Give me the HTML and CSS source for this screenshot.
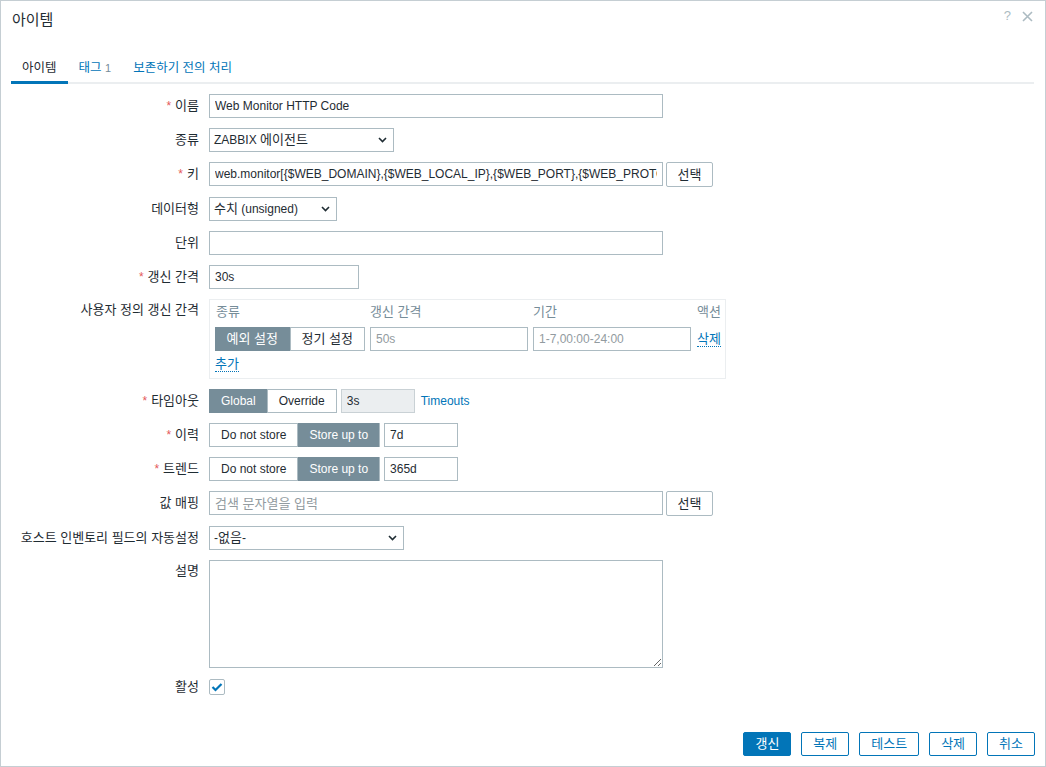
FILE: index.html
```html
<!DOCTYPE html>
<html lang="ko">
<head>
<meta charset="utf-8">
<title>아이템</title>
<link rel="stylesheet" href="styles.css">
</head>
<body>
<div class="dialog">
  <div class="header">
    <h4 class="title">아이템</h4>
    <div class="header-tools">
      <span class="help">?</span>
      <svg class="close" width="11" height="11" viewBox="0 0 11 11"><path d="M1 1L10 10M10 1L1 10" stroke="#acbbc2" stroke-width="1.6" fill="none"/></svg>
    </div>
  </div>

  <ul class="tabs">
    <li class="tab active">아이템</li>
    <li class="tab">태그 <span class="count">1</span></li>
    <li class="tab">보존하기 전의 처리</li>
  </ul>

  <div class="form">
    <label class="lbl req">이름</label>
    <div class="field"><input class="text w453" type="text" value="Web Monitor HTTP Code"></div>

    <label class="lbl">종류</label>
    <div class="field"><div class="select w185"><span>ZABBIX <span class="ko">에이전트</span></span><svg width="9" height="6" viewBox="0 0 9 6"><path d="M1 1L4.5 4.5L8 1" stroke="#1f2c33" stroke-width="1.6" fill="none"/></svg></div></div>

    <label class="lbl req">키</label>
    <div class="field"><input class="text w453" type="text" value="web.monitor[{$WEB_DOMAIN},{$WEB_LOCAL_IP},{$WEB_PORT},{$WEB_PROTOCOL}]"><button class="btn-grey">선택</button></div>

    <label class="lbl">데이터형</label>
    <div class="field"><div class="select w128"><span><span class="ko">수치</span> (unsigned)</span><svg width="9" height="6" viewBox="0 0 9 6"><path d="M1 1L4.5 4.5L8 1" stroke="#1f2c33" stroke-width="1.6" fill="none"/></svg></div></div>

    <label class="lbl">단위</label>
    <div class="field"><input class="text w453" type="text" value=""></div>

    <label class="lbl req">갱신 간격</label>
    <div class="field"><input class="text w150" type="text" value="30s"></div>

    <label class="lbl top">사용자 정의 갱신 간격</label>
    <div class="field">
      <div class="intervals">
        <div class="iv-head">
          <span class="c1">종류</span><span class="c2">갱신 간격</span><span class="c3">기간</span><span class="c4">액션</span>
        </div>
        <div class="iv-row">
          <div class="c1"><div class="seg iv-seg"><span class="on">예외 설정</span><span>정기 설정</span></div></div>
          <div class="c2"><input class="text w157" type="text" placeholder="50s"></div>
          <div class="c3"><input class="text w157" type="text" placeholder="1-7,00:00-24:00"></div>
          <div class="c4"><span class="link dotted">삭제</span></div>
        </div>
        <div class="iv-add"><span class="link dotted">추가</span></div>
      </div>
    </div>

    <label class="lbl req">타임아웃</label>
    <div class="field"><div class="seg"><span class="on">Global</span><span>Override</span></div><input class="text ro w73" type="text" value="3s" readonly><span class="link timeouts">Timeouts</span></div>

    <label class="lbl req">이력</label>
    <div class="field"><div class="seg"><span>Do not store</span><span class="on">Store up to</span></div><input class="text w73" type="text" value="7d"></div>

    <label class="lbl req">트렌드</label>
    <div class="field"><div class="seg"><span>Do not store</span><span class="on">Store up to</span></div><input class="text w73" type="text" value="365d"></div>

    <label class="lbl">값 매핑</label>
    <div class="field"><input class="text w453 ko-input" type="text" placeholder="검색 문자열을 입력"><button class="btn-grey">선택</button></div>

    <label class="lbl">호스트 인벤토리 필드의 자동설정</label>
    <div class="field"><div class="select w194"><span>-<span class="ko">없음</span>-</span><svg width="9" height="6" viewBox="0 0 9 6"><path d="M1 1L4.5 4.5L8 1" stroke="#1f2c33" stroke-width="1.6" fill="none"/></svg></div></div>

    <label class="lbl top">설명</label>
    <div class="field"><textarea class="area"></textarea></div>

    <label class="lbl small">활성</label>
    <div class="field small"><span class="check"><svg width="12" height="10" viewBox="0 0 12 10"><path d="M1.5 5L4.5 8L10.5 2" stroke="#0275b8" stroke-width="2.2" fill="none"/></svg></span></div>
  </div>

  <div class="footer">
    <button class="btn-main">갱신</button>
    <button class="btn-alt">복제</button>
    <button class="btn-alt">테스트</button>
    <button class="btn-alt">삭제</button>
    <button class="btn-alt">취소</button>
  </div>
</div>
</body>
</html>
```

FILE: styles.css
```css
* { box-sizing: border-box; }
html, body { margin: 0; padding: 0; background: #ffffff; }
body {
  font-family: "Liberation Sans", "Noto Sans CJK KR", sans-serif;
  font-size: 12px;
  color: #1f2c33;
}
.ko { font-size: 13px; }
.dialog {
  width: 1046px;
  height: 767px;
  border: 1px solid #c5ced3;
  display: flex;
  flex-direction: column;
  background: #ffffff;
}
.header {
  height: 51px;
  display: flex;
  justify-content: space-between;
  align-items: flex-start;
  padding: 0 12px 0 11px;
}
.title {
  margin: 10px 0 0 0;
  font-size: 15px;
  font-weight: normal;
  line-height: 18px;
  color: #1f2c33;
}
.header-tools {
  display: flex;
  align-items: center;
  gap: 11px;
  margin-top: 8px;
}
.help {
  color: #acbbc2;
  font-size: 13px;
  line-height: 14px;
}
.tabs {
  list-style: none;
  margin: 0 11px 0 10px;
  padding: 0;
  display: flex;
  border-bottom: 2px solid #ebeef0;
  font-size: 12.5px;
}
.tab {
  padding: 3px 11px 0 11px;
  line-height: 26px;
  border-bottom: 3px solid transparent;
  margin-bottom: -2px;
  color: #0275b8;
  white-space: nowrap;
}
.tab.active {
  color: #1f2c33;
  border-bottom-color: #0275b8;
}
.tab .count {
  color: #768d99;
  font-size: 11px;
}
.form {
  margin: 10px 11px 0 10px;
  display: grid;
  grid-template-columns: 188px 1fr;
  column-gap: 10px;
  row-gap: 10px;
}
.lbl {
  text-align: right;
  line-height: 24px;
  height: 24px;
  white-space: nowrap;
  font-size: 13px;
}
.lbl.top { line-height: 20px; height: auto; padding-top: 1px; }
.lbl.small { line-height: 16px; height: 16px; margin-top: 1px; }
.lbl.req::before {
  content: "*";
  color: #e45959;
  margin-right: 4px;
  font-size: 12px;
}
.field {
  display: flex;
  align-items: flex-start;
  min-height: 24px;
}
.field.small { min-height: 16px; padding-top: 1px; }
.text {
  height: 24px;
  border: 1px solid #acbbc2;
  background: #ffffff;
  padding: 0 5px;
  font-family: "Liberation Sans", "Noto Sans CJK KR", sans-serif;
  font-size: 12px;
  color: #1f2c33;
  outline: none;
  margin: 0;
}
.text.ko-input { font-size: 13px; }
.text::placeholder { color: #929ba0; opacity: 1; }
.text.ro {
  background: #ebeef0;
  border-color: #c9d1d5;
  margin-left: 4px;
}
.w453 { width: 454px; }
.w150 { width: 150px; }
.w157 { width: 158px; }
.w73 { width: 74px; margin-left: 4px; }
.select {
  height: 24px;
  border: 1px solid #acbbc2;
  display: flex;
  align-items: center;
  justify-content: space-between;
  padding: 0 6px 0 4px;
  line-height: 22px;
  background: #ffffff;
}
.w185 { width: 185px; }
.w128 { width: 128px; }
.w194 { width: 195px; }
button {
  font-family: "Liberation Sans", "Noto Sans CJK KR", sans-serif;
  font-size: 13px;
  height: 24px;
  padding: 0 11px;
  cursor: pointer;
  margin: 0;
  line-height: 22px;
}
.btn-grey {
  margin-left: 3px;
  width: 47px;
  height: 25px;
  padding: 0;
  background: #ffffff;
  border: 1px solid #acbbc2;
  color: #1f2c33;
  border-radius: 2px;
}
.intervals {
  width: 517px;
  border: 1px solid #ebeef0;
  padding: 5px 3px 5px 5px;
}
.iv-head, .iv-row {
  display: grid;
  grid-template-columns: 155px 163px 164px 1fr;
}
.iv-head {
  color: #768d99;
  line-height: 14px;
  font-size: 13px;
  white-space: nowrap;
}
.iv-head .c1 { padding-left: 1px; }
.iv-row { margin-top: 8px; align-items: center; }
.iv-row .c4 { line-height: 20px; font-size: 13px; white-space: nowrap; }
.iv-add { margin-top: 4px; line-height: 18px; font-size: 13px; }
.seg {
  display: flex;
  height: 24px;
  border: 1px solid #acbbc2;
}
.seg span {
  padding: 0 11px;
  line-height: 22px;
  color: #1f2c33;
  white-space: nowrap;
}
.seg span + span { border-left: 1px solid #acbbc2; }
.seg span.on {
  background: #768d99;
  color: #ffffff;
  margin: -1px 0;
  line-height: 24px;
}
.seg span.on:first-child { margin-left: -1px; padding-left: 12px; }
.seg.iv-seg { width: 150px; font-size: 13px; }
.seg.iv-seg span { width: 75px; text-align: center; padding: 0; }
.seg.iv-seg span.on:first-child { padding-left: 0; width: 75px; }
.link { color: #0275b8; }
.link.dotted { border-bottom: 1px dotted #0275b8; }
.timeouts { margin-left: 6px; line-height: 24px; }
.area {
  width: 454px;
  height: 108px;
  border: 1px solid #acbbc2;
  margin: 0;
  font-family: "Liberation Sans", "Noto Sans CJK KR", sans-serif;
  font-size: 12px;
  resize: both;
  outline: none;
}
.check {
  width: 16px;
  height: 16px;
  border: 1px solid #acbbc2;
  border-radius: 2px;
  display: flex;
  align-items: center;
  justify-content: center;
}
.footer {
  margin-top: auto;
  display: flex;
  justify-content: flex-end;
  gap: 10px;
  padding: 0 10px 10px 11px;
}
.btn-main {
  background: #0275b8;
  border: 1px solid #0275b8;
  color: #ffffff;
  border-radius: 2px;
}
.btn-alt {
  background: #ffffff;
  border: 1px solid #0275b8;
  color: #0275b8;
  border-radius: 2px;
}
```
